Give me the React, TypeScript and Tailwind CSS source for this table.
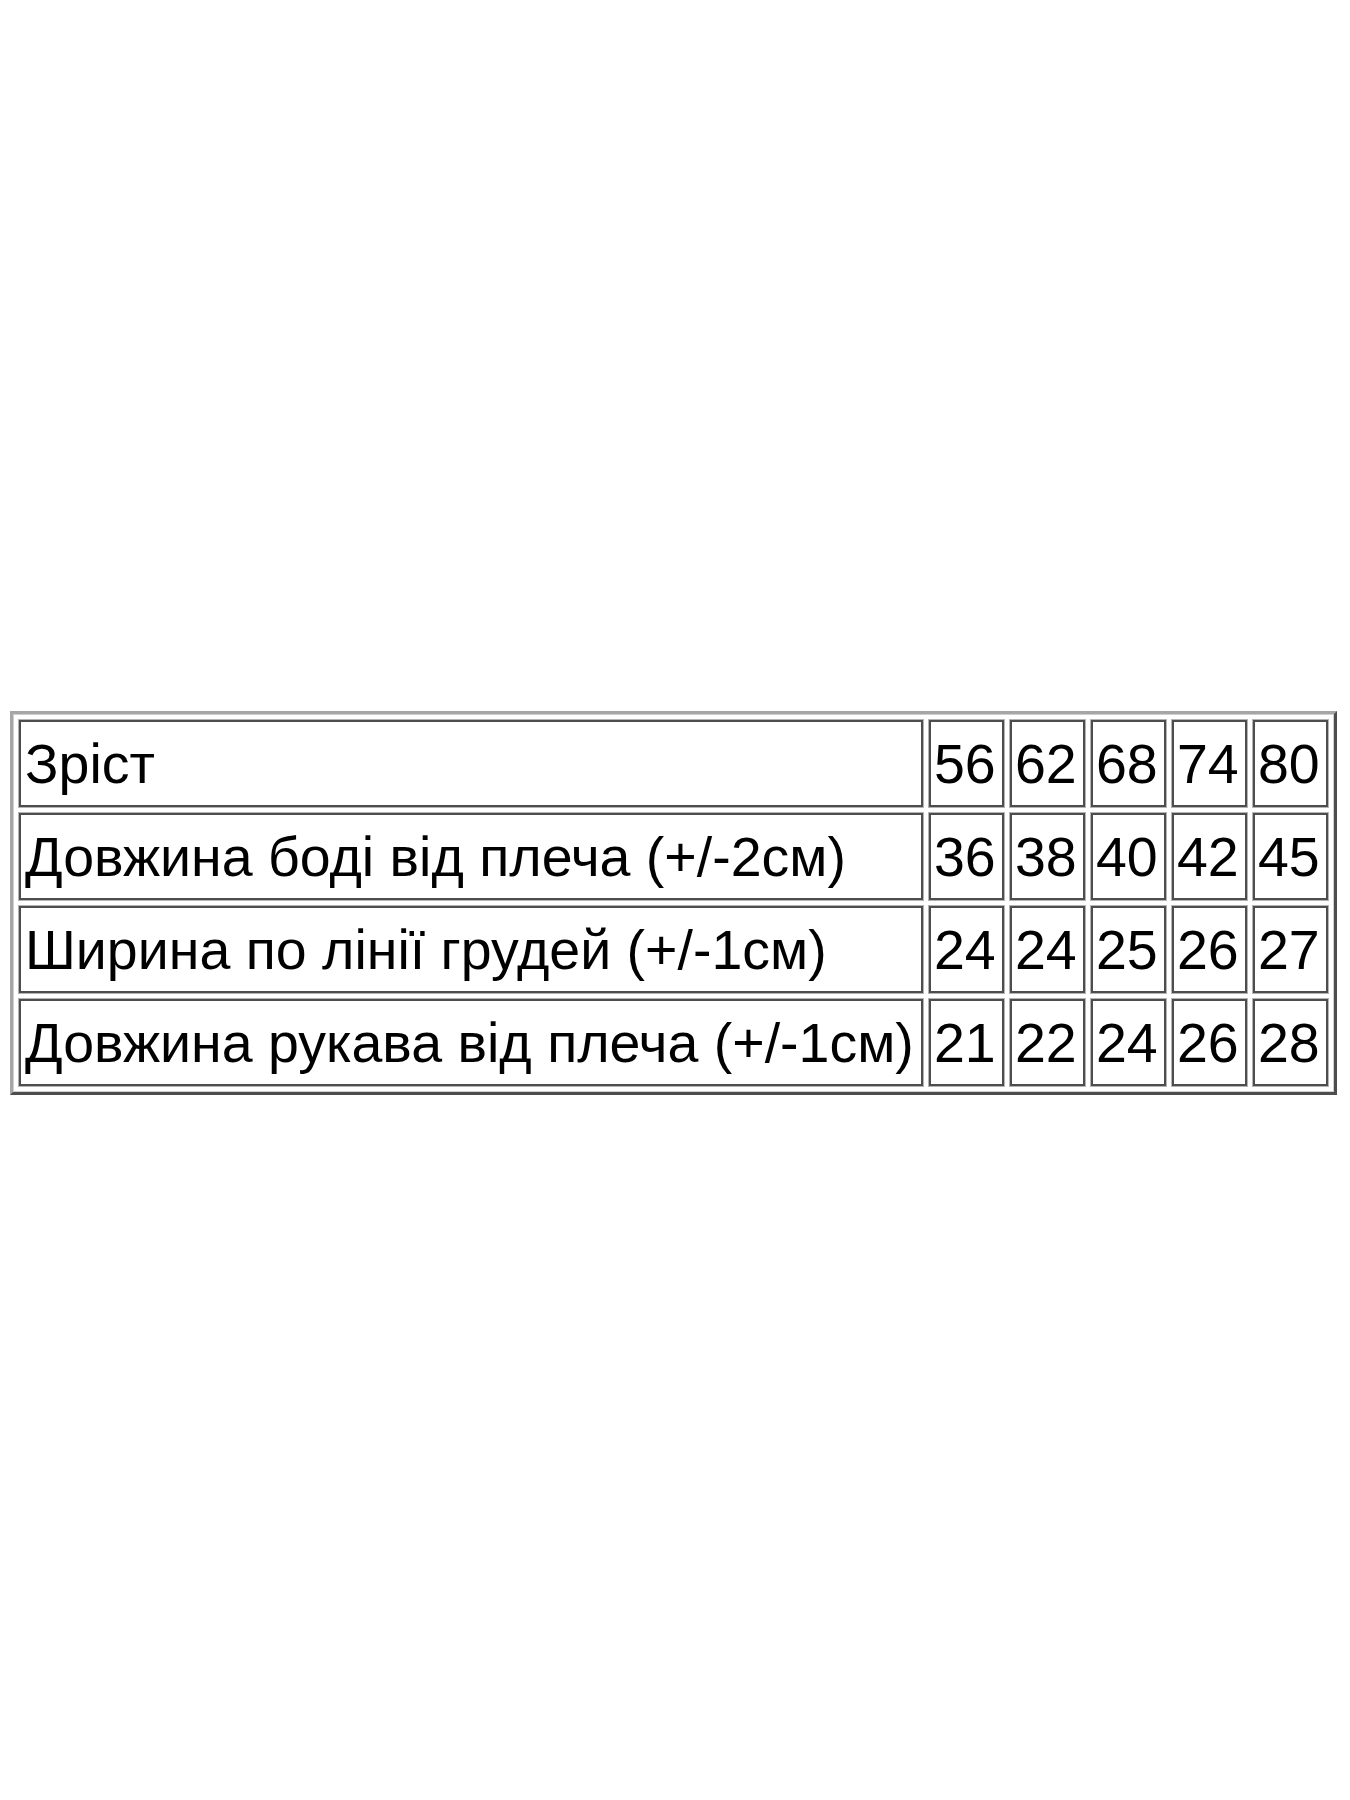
import React from 'react';

const rows: { label: string; values: string[] }[] = [
  { label: 'Зріст', values: ['56', '62', '68', '74', '80'] },
  { label: 'Довжина боді від плеча (+/-2см)', values: ['36', '38', '40', '42', '45'] },
  { label: 'Ширина по лінії грудей (+/-1см)', values: ['24', '24', '25', '26', '27'] },
  { label: 'Довжина рукава від плеча (+/-1см)', values: ['21', '22', '24', '26', '28'] },
];

const cellBase =
  'h-[87px] p-0 align-middle border-2 border-[#4d4d4d] shadow-[0_0_0_1px_#b4b4b4] whitespace-nowrap';

export default function App() {
  return (
    <div className="min-h-[1800px] w-[1350px] bg-white pt-[711px] pl-[10px] font-['Liberation_Sans',Arial,sans-serif] text-black">
      <table className="border-separate border-spacing-[6px] border-[3px] border-t-[#a6a6a6] border-l-[#a6a6a6] border-b-[#4d4d4d] border-r-[#4d4d4d] shadow-[inset_0_0_0_1px_#cfcfcf]">
        <tbody>
          {rows.map((row) => (
            <tr key={row.label}>
              <td className={`${cellBase} w-[904px] pl-[4px] text-left`}>
                <span className="text-[55.5px] leading-[64px]">{row.label}</span>
              </td>
              {row.values.map((v, i) => (
                <td key={i} className={`${cellBase} w-[75px] pl-[3px] text-left`}>
                  <span className="text-[55.5px] leading-[64px]">{v}</span>
                </td>
              ))}
            </tr>
          ))}
        </tbody>
      </table>
    </div>
  );
}
